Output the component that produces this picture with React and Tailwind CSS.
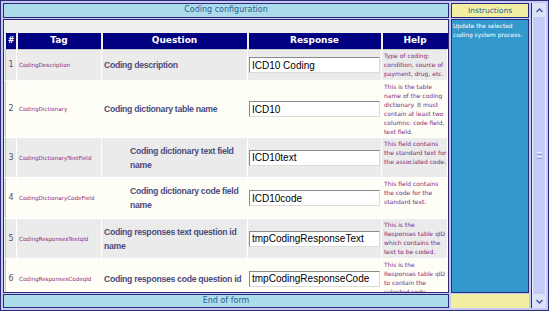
import React from "react";

const rows = [
  { n: 1, tag: "CodingDescription", q: ["Coding description"], r: "ICD10 Coding", help: ["Type of coding:", "condition, source of", "payment, drug, etc."], gray: true, indent: false, h: "h-[31px]" },
  { n: 2, tag: "CodingDictionary", q: ["Coding dictionary table name"], r: "ICD10", help: ["This is the table", "name of the coding", "dictionary. It must", "contain at least two", "columns: code field,", "text field."], gray: false, indent: false, h: "h-[57px]" },
  { n: 3, tag: "CodingDictionaryTextField", q: ["Coding dictionary text field", "name"], r: "ICD10text", help: ["This field contains", "the standard text for", "the associated code."], gray: true, indent: true, h: "h-[40px]" },
  { n: 4, tag: "CodingDictionaryCodeField", q: ["Coding dictionary code field", "name"], r: "ICD10code", help: ["This field contains", "the code for the", "standard text."], gray: false, indent: true, h: "h-[41px]" },
  { n: 5, tag: "CodingResponsesTextqId", q: ["Coding responses text question id", "name"], r: "tmpCodingResponseText", help: ["This is the", "Responses table qID", "which contains the", "text to be coded."], gray: true, indent: false, h: "h-[40px]" },
  { n: 6, tag: "CodingResponsesCodeqId", q: ["Coding responses code question id"], r: "tmpCodingResponseCode", help: ["This is the", "Responses table qID", "to contain the", "selected code."], gray: false, indent: false, h: "h-[40px]" },
];

const cell = "border-t border-l border-t-[#c8c8c8] border-l-[#c8c8c8] border-b border-r border-b-white border-r-white";
const small = { fontFamily: '"DejaVu Sans", Verdana, sans-serif' };

export default function App() {
  return (
    <div className="w-[549px] h-[311px] bg-[#c6c9f3] border border-[#2b2b7a] p-[2px] flex gap-[2px] overflow-hidden" style={{ fontFamily: '"Liberation Sans", Arial, sans-serif' }}>
      {/* left column */}
      <div className="w-[446px] flex flex-col gap-0">
        <div className="h-[15px] border border-[#2b2b7a] bg-[#acdcea] flex items-center justify-center text-[8px] text-[#2c5f97] leading-none" style={small}>
          Coding configuration
        </div>
        <div className="h-[1px]" />
        <div className="h-[275px] border border-[#2b2b7a] bg-[#efefef] pl-[1px] pt-[13px] overflow-hidden">
          <table className="border-collapse w-[442px] table-fixed">
            <colgroup>
              <col className="w-[11px]" />
              <col className="w-[85px]" />
              <col className="w-[146px]" />
              <col className="w-[134px]" />
              <col className="w-[66px]" />
            </colgroup>
            <thead>
              <tr className="h-[17px] bg-[#000080] text-white font-bold text-[9px]" style={small}>
                <th className="border-r-2 border-r-[#efefef] text-[8px] p-0 italic">#</th>
                <th className="border-r-2 border-r-[#efefef] p-0">Tag</th>
                <th className="border-r-2 border-r-[#efefef] p-0">Question</th>
                <th className="border-r-2 border-r-[#efefef] p-0">Response</th>
                <th className="p-0">Help</th>
              </tr>
            </thead>
            <tbody>
              {rows.map((r) => (
                <tr key={r.n} className={`${r.h} ${r.gray ? "bg-[#ebebeb]" : "bg-[#fffef6]"}`}>
                  <td className={`${cell} text-center align-middle text-[8px] text-[#555] p-0`} style={small}>{r.n}</td>
                  <td className={`${cell} align-middle text-[5.6px] text-[#8a2a7a] pl-[2px] whitespace-nowrap overflow-hidden`} style={small}>{r.tag}</td>
                  <td className={`${cell} align-middle text-[8.7px] leading-[14px] font-bold tracking-[-0.3px] text-[#4b4b7d] whitespace-nowrap overflow-hidden ${r.indent ? "pl-[28px]" : "pl-[2px]"}`}>
                    {r.q.map((line, i) => (
                      <div key={i}>{line}</div>
                    ))}
                  </td>
                  <td className={`${cell} align-middle px-[1px]`}>
                    <div className="h-[16px] bg-white border border-t-[#8a8a8a] border-l-[#8a8a8a] border-b-[#dcdcdc] border-r-[#dcdcdc] flex items-center pl-[2px] text-[10px] text-black whitespace-nowrap overflow-hidden">
                      {r.r}
                    </div>
                  </td>
                  <td className={`${cell} align-top text-[6px] leading-[9px] text-[#7a2a7a] pl-[2px] pt-[1px] pr-0 whitespace-nowrap overflow-hidden`} style={small}>
                    {r.help.map((line, i) => (
                      <div key={i}>{line}</div>
                    ))}
                  </td>
                </tr>
              ))}
            </tbody>
          </table>
        </div>
        <div className="h-[1px]" />
        <div className="h-[14px] border border-[#2b2b7a] bg-[#acdcea] flex items-center justify-center text-[8px] text-[#2c5f97] leading-none" style={small}>
          End of form
        </div>
      </div>
      {/* right column */}
      <div className="w-[79px] flex flex-col">
        <div className="h-[15px] border border-[#2b2b7a] bg-[#f3efa2] flex items-center justify-center text-[7.5px] text-[#2c5f97] leading-none" style={small}>
          Instructions
        </div>
        <div className="h-[1px]" />
        <div className="h-[275px] border border-[#2b2b7a] bg-[#3399cc] text-white text-[5.9px] leading-[9px] px-[1px] pt-[2px]" style={small}>
          <div>Update the selected</div>
          <div>coding system process.</div>
        </div>
        <div className="h-[1px]" />
        <div className="h-[14px] bg-[#f3efa2]" />
      </div>
      {/* scrollbar */}
      <div className="w-[15px] flex flex-col border-l border-[#2b2b7a]">
        <div className="h-[14px] bg-[#dde2fb] flex items-center justify-center">
          <svg width="7" height="5" viewBox="0 0 7 5"><path d="M0.5 4 L3.5 1 L6.5 4" stroke="#4d5aa0" strokeWidth="1.5" fill="none" /></svg>
        </div>
        <div className="flex-1 bg-[#c3cbf6] border-x border-[#eef0ff] flex items-center justify-center">
          <div className="w-[5px] flex flex-col gap-[1px]">
            <div className="h-[1px] bg-[#eef0ff]" />
            <div className="h-[1px] bg-[#9aa4d8]" />
            <div className="h-[1px] bg-[#eef0ff]" />
            <div className="h-[1px] bg-[#9aa4d8]" />
          </div>
        </div>
        <div className="h-[14px] bg-[#dde2fb] flex items-center justify-center">
          <svg width="7" height="5" viewBox="0 0 7 5"><path d="M0.5 1 L3.5 4 L6.5 1" stroke="#4d5aa0" strokeWidth="1.5" fill="none" /></svg>
        </div>
      </div>
    </div>
  );
}
